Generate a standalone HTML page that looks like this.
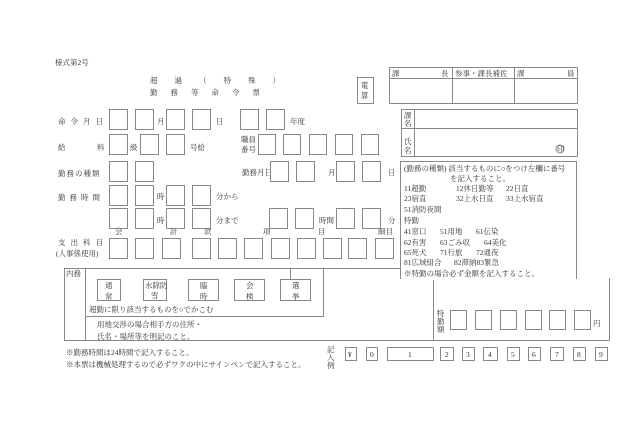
<!DOCTYPE html>
<html><head><meta charset="utf-8"><style>
html,body{margin:0;padding:0;background:#fff;}
svg{display:block;}
text{font-family:"Liberation Serif","Noto Serif CJK SC",serif;fill:#333;font-size:7.5px;}
.b{fill:none;stroke:#888;stroke-width:1;}
.l{stroke:#888;stroke-width:1;fill:none;}
</style></head><body>
<svg width="630" height="441" viewBox="0 0 630 441" xmlns="http://www.w3.org/2000/svg">
<text x="55" y="65" font-size="8">様式第2号</text>
<text x="150" y="83" font-size="8.5" letter-spacing="17">超過（特殊）</text>
<text x="150" y="95" font-size="8.5" letter-spacing="13">勤務等命令票</text>
<rect class="b" x="357.5" y="77.5" width="16" height="26"/>
<text x="361" y="88">電</text><text x="361" y="98">算</text>

<rect class="b" x="389.5" y="67.5" width="188" height="36"/>
<line class="l" x1="389" y1="78.5" x2="578" y2="78.5"/>
<line class="l" x1="452.5" y1="67" x2="452.5" y2="104"/>
<line class="l" x1="514.5" y1="67" x2="514.5" y2="104"/>
<text x="392" y="76">課</text><text x="441" y="76">長</text>
<text x="455" y="76">参事・課長補佐</text>
<text x="517" y="76">課</text><text x="567" y="76">員</text>

<rect class="b" x="401.5" y="109.5" width="176" height="47"/>
<line class="l" x1="401" y1="128.5" x2="578" y2="128.5"/>
<line class="l" x1="414.5" y1="109" x2="414.5" y2="157"/>
<text x="404" y="118">課</text><text x="404" y="126">名</text>
<text x="404" y="144">氏</text><text x="404" y="153">名</text>
<circle cx="560" cy="149" r="4" class="l"/><text x="557" y="151.5" font-size="5.5">印</text>

<polyline class="l" points="400.5,279 400.5,161.5 576.5,161.5 576.5,279"/>
<text x="404" y="171">(勤務の種類) 該当するものに○をつけ左欄に番号</text>
<text x="450" y="181">を記入すること。</text>
<text x="404" y="191">11超勤</text><text x="456" y="191">12休日勤等</text><text x="506" y="191">22日直</text>
<text x="404" y="201">23宿直</text><text x="456" y="201">32上水日直</text><text x="506" y="201">33上水宿直</text>
<text x="404" y="212">51消防夜間</text>
<text x="404" y="223">特勤</text>
<text x="404" y="234">41窓口</text><text x="440" y="234">51用地</text><text x="476" y="234">61伝染</text>
<text x="404" y="245">62有害</text><text x="440" y="245">63ごみ収</text><text x="484" y="245">64美化</text>
<text x="404" y="255">65死犬</text><text x="440" y="255">71行旅</text><text x="476" y="255">72通夜</text>
<text x="404" y="265">81広域組合</text><text x="454" y="265">82滞納83緊急</text>
<text x="404" y="276">※特勤の場合必ず金額を記入すること。</text>

<g font-size="8.5">
<text x="58" y="124" letter-spacing="5">命令月日</text>
<text x="58" y="150">給</text><text x="97" y="150">料</text>
<text x="58" y="176" letter-spacing="1">勤務の種類</text>
<text x="58" y="200" letter-spacing="4">勤務時間</text>
<text x="58" y="245" letter-spacing="5">支出科目</text>
<text x="56" y="256" font-size="8">(人事係使用)</text>
</g>
<text x="157" y="124">月</text><text x="216" y="124">日</text><text x="290" y="124">年度</text>
<text x="130" y="150">級</text><text x="190" y="150">号給</text>
<text x="241" y="142">職員</text><text x="241" y="152">番号</text>
<text x="242" y="175">勤務月日</text><text x="328" y="175">月</text><text x="388" y="175">日</text>
<text x="157" y="199">時</text><text x="216" y="199">分から</text>
<text x="157" y="223">時</text><text x="216" y="223">分まで</text>
<text x="319" y="223">時間</text><text x="388" y="223">分</text>
<text x="115" y="234">会</text><text x="170" y="234">計</text><text x="204" y="234">款</text>
<text x="263" y="234">項</text><text x="318" y="234">目</text><text x="378" y="234">細目</text>

<g class="b">
<rect x="109.5" y="109.5" width="18" height="20"/><rect x="135.5" y="109.5" width="18" height="20"/>
<rect x="166.5" y="109.5" width="18" height="20"/><rect x="192.5" y="109.5" width="18" height="20"/>
<rect x="240.5" y="109.5" width="18" height="20"/><rect x="266.5" y="109.5" width="18" height="20"/>
<rect x="109.5" y="134.5" width="18" height="20"/><rect x="140.5" y="134.5" width="18" height="20"/>
<rect x="166.5" y="134.5" width="18" height="20"/>
<rect x="258.5" y="134.5" width="17" height="20"/><rect x="283.5" y="134.5" width="17" height="20"/>
<rect x="309.5" y="134.5" width="17" height="20"/><rect x="335.5" y="134.5" width="17" height="20"/>
<rect x="361.5" y="134.5" width="17" height="20"/>
<rect x="109.5" y="161.5" width="18" height="20"/><rect x="135.5" y="161.5" width="18" height="20"/>
<rect x="270.5" y="161.5" width="18" height="20"/><rect x="296.5" y="161.5" width="18" height="20"/>
<rect x="336.5" y="161.5" width="18" height="20"/><rect x="362.5" y="161.5" width="18" height="20"/>
<rect x="109.5" y="185.5" width="18" height="20"/><rect x="135.5" y="185.5" width="18" height="20"/>
<rect x="166.5" y="185.5" width="18" height="20"/><rect x="192.5" y="185.5" width="18" height="20"/>
<rect x="109.5" y="208.5" width="18" height="20"/><rect x="135.5" y="208.5" width="18" height="20"/>
<rect x="166.5" y="208.5" width="18" height="20"/><rect x="192.5" y="208.5" width="18" height="20"/>
<rect x="269.5" y="208.5" width="18" height="20"/><rect x="295.5" y="208.5" width="18" height="20"/>
<rect x="336.5" y="208.5" width="18" height="20"/><rect x="362.5" y="208.5" width="18" height="20"/>
<rect x="109.5" y="238.5" width="18" height="20"/><rect x="135.5" y="238.5" width="18" height="20"/>
<rect x="162.5" y="238.5" width="18" height="20"/><rect x="192.5" y="238.5" width="18" height="20"/>
<rect x="218.5" y="238.5" width="18" height="20"/><rect x="244.5" y="238.5" width="18" height="20"/>
<rect x="271.5" y="238.5" width="18" height="20"/><rect x="297.5" y="238.5" width="18" height="20"/>
<rect x="323.5" y="238.5" width="18" height="20"/><rect x="348.5" y="238.5" width="18" height="20"/>
<rect x="375.5" y="238.5" width="18" height="20"/>
</g>

<line class="l" x1="64" y1="268.5" x2="400" y2="268.5"/>
<line class="l" x1="64.5" y1="268" x2="64.5" y2="341"/>
<line class="l" x1="64" y1="340.5" x2="610" y2="340.5"/>
<line class="l" x1="609.5" y1="278" x2="609.5" y2="341"/>
<line class="l" x1="433.5" y1="280" x2="433.5" y2="341"/>
<line class="l" x1="85.5" y1="268" x2="85.5" y2="341"/>
<line class="l" x1="85" y1="316.5" x2="324" y2="316.5"/>
<line class="l" x1="323.5" y1="268" x2="323.5" y2="317"/>
<line class="l" x1="290.5" y1="268" x2="290.5" y2="280"/>
<text x="66" y="276">内務</text>
<g class="b">
<rect x="97.5" y="279.5" width="23" height="21"/><rect x="143.5" y="279.5" width="23" height="21"/>
<rect x="188.5" y="279.5" width="30" height="21"/><rect x="234.5" y="279.5" width="30" height="21"/>
<rect x="280.5" y="279.5" width="30" height="21"/>
</g>
<text x="105" y="288">通</text><text x="105" y="299">常</text>
<text x="145" y="288" font-size="6.8">水除防</text><text x="151" y="298">雪</text>
<text x="200" y="288">臨</text><text x="200" y="299">時</text>
<text x="246" y="288">会</text><text x="246" y="299">検</text>
<text x="292" y="288">選</text><text x="292" y="299">挙</text>
<text x="89" y="312">超勤に限り該当するものを○でかこむ</text>
<text x="97" y="327">用地交渉の場合相手方の住所・</text>
<text x="97" y="339">氏名・場所等を明記のこと。</text>

<text x="437" y="316">特</text><text x="437" y="324">勤</text><text x="437" y="332">額</text>
<g class="b">
<rect x="450.5" y="310.5" width="16" height="19"/><rect x="475.5" y="310.5" width="16" height="19"/>
<rect x="500.5" y="310.5" width="16" height="19"/><rect x="525.5" y="310.5" width="16" height="19"/>
<rect x="549.5" y="310.5" width="16" height="19"/><rect x="574.5" y="310.5" width="16" height="19"/>
</g>
<text x="593" y="326">円</text>

<text x="66" y="355" font-size="7.2">※勤務時間は24時間で記入すること。</text>
<text x="66" y="367" font-size="7.2">※本票は機械処理するので必ずワクの中にサインペンで記入すること。</text>
<text x="327" y="352">記</text><text x="327" y="360">入</text><text x="327" y="368">例</text>
<g class="b">
<rect x="345.5" y="347.5" width="11" height="13"/><rect x="366.5" y="347.5" width="11" height="13"/>
<rect x="387.5" y="347.5" width="46" height="13"/>
<rect x="440.5" y="347.5" width="13" height="13"/><rect x="462.5" y="347.5" width="12" height="13"/>
<rect x="483.5" y="347.5" width="14" height="13"/><rect x="507.5" y="347.5" width="12" height="13"/>
<rect x="528.5" y="347.5" width="12" height="13"/><rect x="550.5" y="347.5" width="13" height="13"/>
<rect x="573.5" y="347.5" width="12" height="13"/><rect x="595.5" y="347.5" width="12" height="13"/>
</g>
<g font-size="7">
<text x="348" y="357">¥</text><text x="370" y="357">0</text><text x="408" y="357">1</text>
<text x="445" y="357">2</text><text x="466" y="357">3</text><text x="488" y="357">4</text>
<text x="511" y="357">5</text><text x="532" y="357">6</text><text x="555" y="357">7</text>
<text x="577" y="357">8</text><text x="599" y="357">9</text>
</g>
</svg>
</body></html>
